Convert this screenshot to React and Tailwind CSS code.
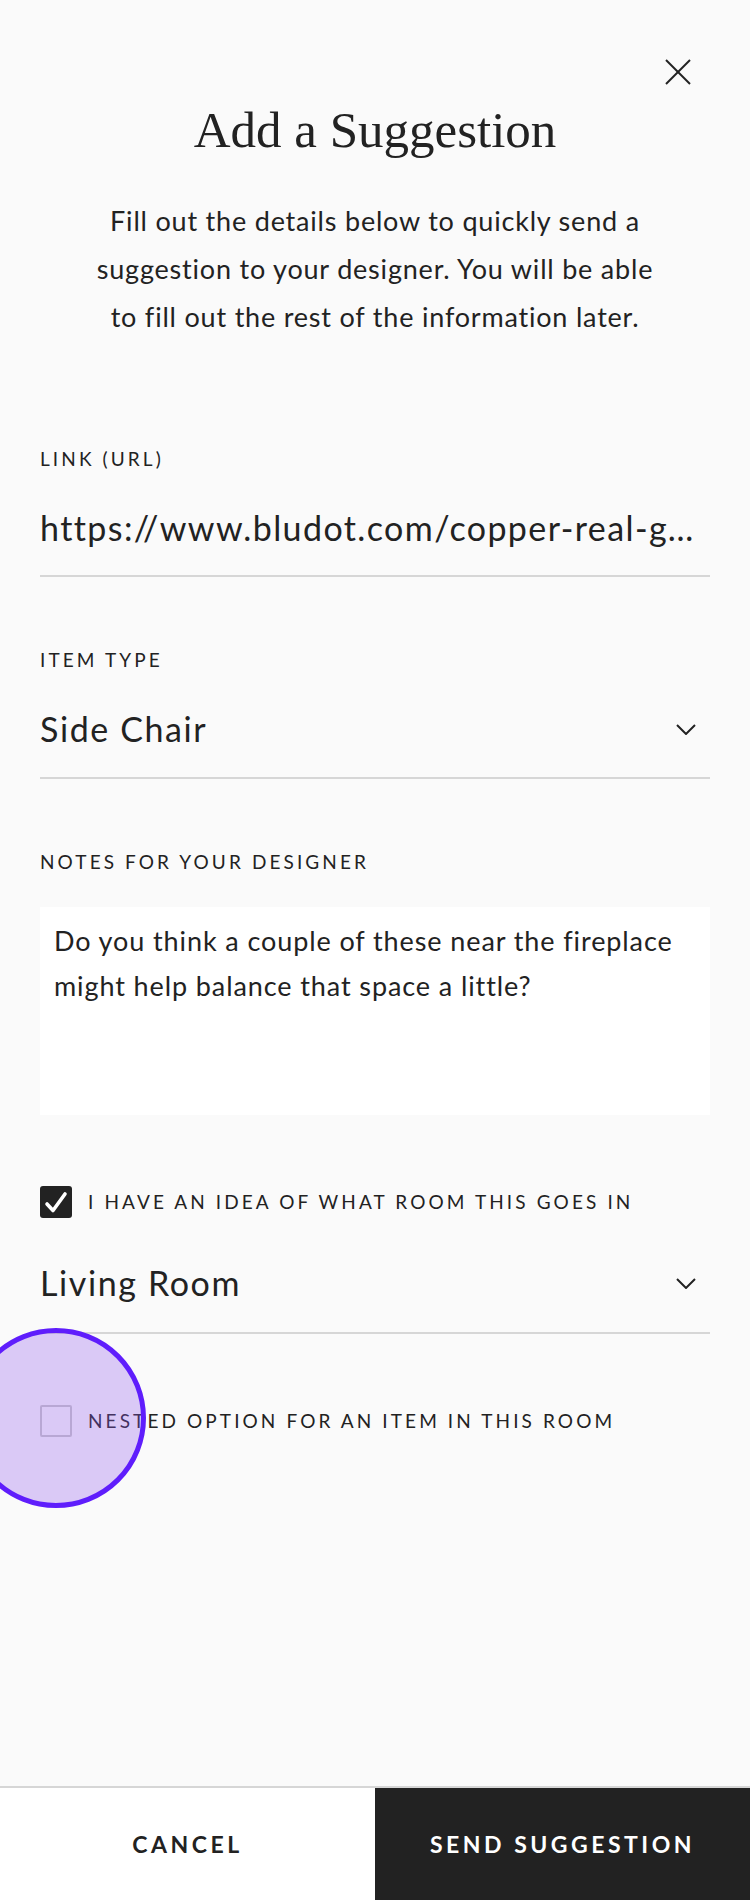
import React from 'react';

const sans = "font-['Lato','Noto_Sans',sans-serif]";

const Chevron = () => (
  <svg width="20" height="11" viewBox="0 0 20 11" className="mr-[14px] shrink-0">
    <polyline points="1,1 10,10 19,1" fill="none" stroke="#222" strokeWidth="2" />
  </svg>
);

const FieldLabel = ({ children, className = '' }) => (
  <div className={`text-[19px] leading-[20px] tracking-[3.1px] uppercase text-[#222] ${className}`}>
    {children}
  </div>
);

const App = () => {
  return (
    <div className={`relative h-[1900px] w-[750px] overflow-hidden bg-[#fafafa] flex flex-col ${sans}`}>
      <main className="flex-1 px-[40px] pt-[59px]">
        {/* Close */}
        <div className="flex justify-end pr-[19px]">
          <svg width="26" height="26" viewBox="0 0 26 26">
            <line x1="1" y1="1" x2="25" y2="25" stroke="#222" strokeWidth="2" />
            <line x1="25" y1="1" x2="1" y2="25" stroke="#222" strokeWidth="2" />
          </svg>
        </div>

        <h1 className="mt-[20px] text-center font-['Liberation_Serif',serif] text-[51px] leading-[51px] text-[#222]">
          Add a Suggestion
        </h1>

        <p className="mt-[41px] text-center text-[27px] leading-[48px] tracking-[0.8px] text-[#222]">
          Fill out the details below to quickly send a<br />
          suggestion to your designer. You will be able<br />
          to fill out the rest of the information later.
        </p>

        {/* Link */}
        <FieldLabel className="mt-[108px]">Link (URL)</FieldLabel>
        <div className="mt-[39px] pb-[27px] border-b-2 border-[#d6d6d6]">
          <div className="truncate text-[34px] leading-[40px] tracking-[1.4px] text-[#222]">
            https://www.bludot.com/copper-real-good-side-chair.html
          </div>
        </div>

        {/* Item type */}
        <FieldLabel className="mt-[73px]">Item Type</FieldLabel>
        <div className="mt-[39px] pb-[28px] border-b-2 border-[#d6d6d6] flex items-center justify-between">
          <span className="text-[34px] leading-[40px] tracking-[1.6px] text-[#222]">Side Chair</span>
          <Chevron />
        </div>

        {/* Notes */}
        <FieldLabel className="mt-[73px]">Notes for your designer</FieldLabel>
        <div className="mt-[35px] h-[208px] bg-white pl-[14px] pt-[11px] text-[27px] leading-[45px] tracking-[0.9px] text-[#222]">
          Do you think a couple of these near the fireplace<br />
          might help balance that space a little?
        </div>

        {/* Room checkbox */}
        <div className="mt-[71px] flex items-center gap-[16px]">
          <div className="w-[32px] h-[32px] rounded-[3px] bg-[#222] flex items-center justify-center">
            <svg width="32" height="32" viewBox="0 0 32 32">
              <polyline points="7,18 13,24.5 25,8" fill="none" stroke="#fff" strokeWidth="3.6" strokeLinecap="round" strokeLinejoin="round" />
            </svg>
          </div>
          <FieldLabel>I have an idea of what room this goes in</FieldLabel>
        </div>

        <div className="mt-[45px] pb-[29px] border-b-2 border-[#d6d6d6] flex items-center justify-between">
          <span className="text-[34px] leading-[40px] tracking-[1.6px] text-[#222]">Living Room</span>
          <Chevron />
        </div>

        {/* Nested option */}
        <div className="mt-[71px] flex items-center gap-[16px]">
          <div className="w-[32px] h-[32px] rounded-[2px] border-2 border-[#c9c9c9] bg-[#fafafa]" />
          <FieldLabel>Nested option for an item in this room</FieldLabel>
        </div>
      </main>

      {/* Footer */}
      <footer className="h-[114px] border-t-2 border-[#d6d6d6] flex">
        <button className="w-1/2 bg-white text-[23px] font-bold tracking-[3.5px] text-[#222]">
          CANCEL
        </button>
        <button className="w-1/2 bg-[#222] text-[23px] font-bold tracking-[3.5px] text-white">
          SEND SUGGESTION
        </button>
      </footer>

      {/* Touch indicator */}
      <div className="absolute left-[-34px] top-[1328px] w-[180px] h-[180px] rounded-full border-[5px] border-[#5f1dfc] bg-[#915af0]/30" />
    </div>
  );
};

export default App;
